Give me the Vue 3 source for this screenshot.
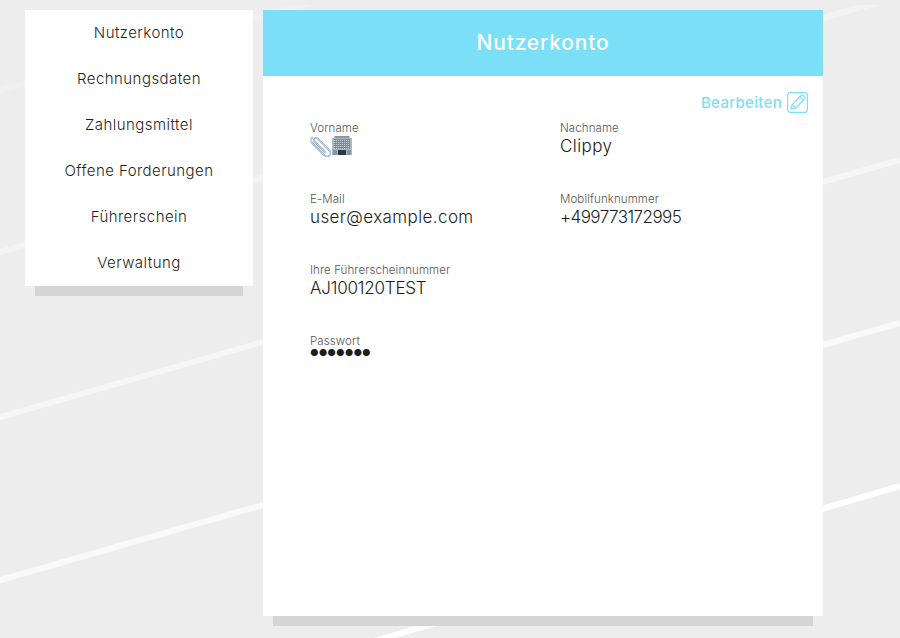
<script setup>
const menu = ['Nutzerkonto', 'Rechnungsdaten', 'Zahlungsmittel', 'Offene Forderungen', 'Führerschein', 'Verwaltung']
</script>

<template>
  <div class="page">
    <svg class="bg-lines" width="900" height="638" viewBox="0 0 900 638">
      <defs>
        <clipPath id="bg-clip"><rect x="0" y="5" width="900" height="633" /></clipPath>
      </defs>
      <g clip-path="url(#bg-clip)" stroke-width="6">
        <line x1="-10" y1="93" x2="320" y2="0" stroke="#f0f0f0" />
        <line x1="-10" y1="255" x2="900" y2="-4" stroke="#f3f3f3" />
        <line x1="-10" y1="420" x2="900" y2="160" stroke="#f6f6f6" />
        <line x1="-10" y1="583" x2="900" y2="323" stroke="#f9f9f9" />
        <line x1="300" y1="663" x2="900" y2="486" stroke="#ffffff" />
      </g>
    </svg>

    <nav class="sidebar">
      <a v-for="item in menu" :key="item" class="menu-item">{{ item }}</a>
    </nav>

    <main class="card">
      <header class="card-header">Nutzerkonto</header>
      <div class="card-body">
        <div class="edit">
          <span>Bearbeiten</span>
          <svg width="21" height="21" viewBox="0 0 21 21" fill="none" stroke="#7adff7" stroke-width="1.2">
            <rect x="0.6" y="0.6" width="19.8" height="19.8" rx="3" />
            <path d="M4 17l1.200-4.500 8.800-9a1.600 1.600 0 0 1 2.300 0l1.200 1.200a1.600 1.600 0 0 1 0 2.300l-8.800 9z" />
            <path d="M5.200 12.500l3.300 3.500M12.800 4.700l3.500 3.500" />
          </svg>
        </div>

        <div class="fields">
          <div class="field">
            <label>Vorname</label>
            <div class="value emoji">
              <svg width="22" height="22" viewBox="0 0 22 22" fill="none" stroke-linecap="round">
                <g transform="translate(11 11) rotate(45) translate(-13 -6)">
                  <path class="clip-edge" d="M20 7.500H5.500a2.200 2.200 0 0 1 0-4.400H22a3.500 3.500 0 0 1 0 7H5a4 4 0 0 1-4-4" />
                  <path class="clip-fill" d="M20 7.500H5.500a2.200 2.200 0 0 1 0-4.400H22a3.500 3.500 0 0 1 0 7H5a4 4 0 0 1-4-4" />
                </g>
              </svg>
              <svg width="20" height="20" viewBox="0 0 20 20">
                <defs>
                  <pattern id="windows" width="2" height="2" patternUnits="userSpaceOnUse">
                    <rect width="2" height="2" fill="#7d8c98" />
                    <rect width="1" height="1" fill="#c3d0d8" />
                  </pattern>
                </defs>
                <rect x="2.500" y="0" width="15" height="2" fill="#8a97a1" />
                <rect x="0" y="2" width="20" height="17" fill="#aab9c3" />
                <rect x="2" y="3" width="16" height="10" fill="url(#windows)" />
                <rect x="6" y="14" width="8" height="5" fill="#2c3a46" />
                <rect x="1" y="14" width="4" height="5" fill="#87969f" />
                <rect x="15" y="14" width="4" height="5" fill="#87969f" />
              </svg>
            </div>
          </div>
          <div class="field">
            <label>Nachname</label>
            <div class="value">Clippy</div>
          </div>
          <div class="field">
            <label>E-Mail</label>
            <div class="value">user@example.com</div>
          </div>
          <div class="field">
            <label>Mobilfunknummer</label>
            <div class="value phone">+499773172995</div>
          </div>
          <div class="field wide">
            <label>Ihre Führerscheinnummer</label>
            <div class="value licence">AJ100120TEST</div>
          </div>
          <div class="field wide">
            <label>Passwort</label>
            <div class="value dots">●●●●●●●</div>
          </div>
        </div>
      </div>
    </main>
  </div>
</template>

<style>
body {
  background: #ededed;
}
</style>

<style scoped>
.page {
  position: relative;
  display: flex;
  align-items: flex-start;
  gap: 10px;
  height: 638px;
  box-sizing: border-box;
  padding: 10px 0 0 25px;
  overflow: hidden;
  background: #ededed;
  font-family: Inter, "Noto Sans", sans-serif;
  color: #222;
}

.bg-lines {
  position: absolute;
  top: 0;
  left: 0;
}

.sidebar {
  position: relative;
  width: 228px;
  background: #fff;
  box-shadow: 0 20px 0 -10px #d5d5d5;
}

.menu-item {
  display: block;
  height: 46px;
  line-height: 45px;
  text-align: center;
  font-size: 15px;
  font-weight: 300;
  letter-spacing: 0.45px;
  color: #1f1f1f;
}

.card {
  position: relative;
  width: 560px;
  height: 606px;
  background: #fff;
  box-shadow: 0 20px 0 -10px #d5d5d5;
}

.card-header {
  height: 66px;
  line-height: 65px;
  text-align: center;
  background: #7adff7;
  color: #fff;
  font-size: 21px;
  font-weight: 500;
  letter-spacing: 0.8px;
}

.card-body {
  padding: 16px 15px 0 47px;
}

.edit {
  display: flex;
  justify-content: flex-end;
  align-items: center;
  gap: 5px;
  height: 21px;
  color: #7adff7;
  font-size: 15px;
  font-weight: 500;
  letter-spacing: 0.3px;
}

.fields {
  display: grid;
  grid-template-columns: 250px 250px;
  grid-auto-rows: 71px;
  margin-top: 8px;
}

.field.wide {
  grid-column: 1 / span 2;
}

label {
  display: block;
  font-size: 11.500px;
  font-weight: 300;
  line-height: 14px;
  letter-spacing: 0.1px;
  color: #555;
}

.value {
  font-size: 17px;
  font-weight: 300;
  line-height: 22px;
  letter-spacing: 0.4px;
  color: #1c1c1c;
}

.phone {
  letter-spacing: -0.55px;
}

.licence {
  letter-spacing: -0.2px;
}

.emoji {
  display: flex;
  height: 22px;
  align-items: center;
}

.clip-edge {
  stroke: #8aa0b8;
  stroke-width: 1.800;
}

.clip-fill {
  stroke: #d3e0ee;
  stroke-width: 0.800;
}

.dots {
  font-size: 9.500px;
  line-height: 10px;
  letter-spacing: 0;
}
</style>
